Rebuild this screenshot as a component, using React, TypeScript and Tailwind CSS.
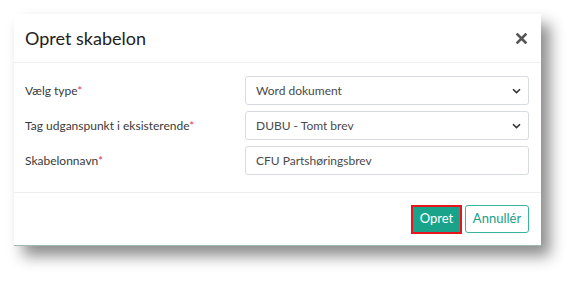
import React from "react";

function Chevron() {
  return (
    <svg width="9" height="6" viewBox="0 0 9 6" className="absolute right-[7px] top-1/2 -translate-y-1/2">
      <path d="M1 1.2 L4.5 4.6 L8 1.2" fill="none" stroke="#333" strokeWidth="1.6" />
    </svg>
  );
}

function Field({ label, value, select }: { label: string; value: string; select?: boolean }) {
  return (
    <div className="flex items-center h-[29px]">
      <div className="w-[220px] text-[12px] text-[#3a3a3a]">
        {label}
        <span className="text-[#e0405a]">*</span>
      </div>
      <div className="relative flex-1 h-[29px] border border-[#d7dbdf] rounded-[3px] flex items-center pl-[10px] text-[12px] text-[#4a4a4a] bg-white">
        {value}
        {select && <Chevron />}
      </div>
    </div>
  );
}

export default function App() {
  return (
    <div className="w-[575px] h-[282px] bg-white pl-[14px] pt-[14px]" style={{ fontFamily: "Lato, 'Open Sans', sans-serif" }}>
      <div className="w-[527px] h-[232px] bg-white border-b border-[#9db9b0] shadow-[9px_10px_14px_rgba(0,0,0,0.45)] flex flex-col">
        <div className="h-[49px] border-b border-[#eceeef] flex items-center justify-between pl-[11px] pr-[14px]">
          <div className="text-[18px] text-[#222]">Opret skabelon</div>
          <svg width="11" height="11" viewBox="0 0 11 11">
            <path d="M1.5 1.5 L9.5 9.5 M9.5 1.5 L1.5 9.5" stroke="#555" strokeWidth="2.6" strokeLinecap="square" />
          </svg>
        </div>
        <div className="pl-[11px] pr-[12px] pt-[13px] pb-[17px] flex flex-col gap-[6px] border-b border-[#eceeef]">
          <Field label="Vælg type" value="Word dokument" select />
          <Field label="Tag udganspunkt i eksisterende" value="DUBU - Tomt brev" select />
          <Field label="Skabelonnavn" value="CFU Partshøringsbrev" />
        </div>
        <div className="flex-1 flex items-center justify-end gap-[3px] pr-[12px]">
          <div className="border-2 border-[#e8141c]">
            <div className="bg-[#19a38b] text-white text-[13px] w-[47px] h-[25px] flex items-center justify-center">Opret</div>
          </div>
          <div className="border border-[#3ab3a0] rounded-[3px] text-[#1b9e88] text-[13px] w-[64px] h-[28px] flex items-center justify-center">Annullér</div>
        </div>
      </div>
    </div>
  );
}
